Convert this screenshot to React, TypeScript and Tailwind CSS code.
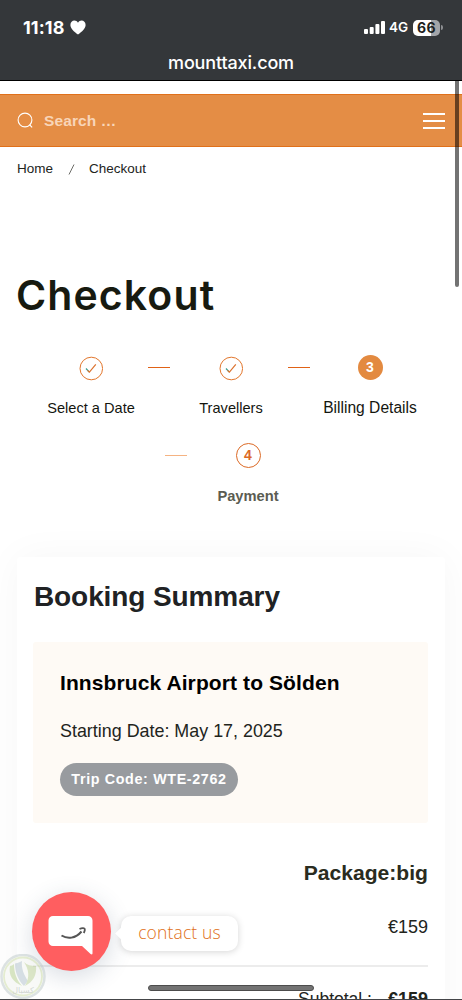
import type { ReactNode } from "react"

const CheckIcon = () => (
	<svg
		className="mt-px"
		width="24"
		height="25"
		viewBox="0 0 24 25"
		fill="none"
	>
		<circle cx="12.3" cy="12.5" r="11.3" stroke="#e2762c" strokeWidth="1" />
		<path d="M7 12.5l3.4 3.6" stroke="#3a9d8c" strokeWidth="1.2" />
		<path d="M8.5 14.3l1.9 1.9L16.8 8.300" stroke="#dc732f" strokeWidth="1.2" />
	</svg>
)

function StepLine({ className }: { className: string }) {
	return <div className={`mt-[12px] h-px w-[22px] ${className}`} />
}

function Step({
	icon,
	label,
	className,
}: {
	icon: ReactNode
	label: string
	className: string
}) {
	return (
		<div
			className={`flex flex-col items-center whitespace-nowrap ${className}`}
		>
			<div className="flex h-[25px] items-center">{icon}</div>
			<span className="mt-[18px] leading-[20px]">{label}</span>
		</div>
	)
}

function StatusBar() {
	return (
		<header className="h-[81px] border-b border-black bg-[#34373a] font-['Inter',sans-serif] text-white">
			<div className="flex h-[52px] items-center pt-[3px] pr-[19px] pl-[23px]">
				<span className="text-[18px] leading-none font-bold tracking-[0.1px]">
					11:18
				</span>
				<svg
					className="ml-[5px]"
					width="16"
					height="15"
					viewBox="0 0 16 15"
					fill="white"
				>
					<path d="M8 14.6C4 11.4.4 8.5.4 4.9.4 2.3 2.3.6 4.4.6 5.9.6 7.2 1.4 8 2.8 8.8 1.4 10.1.6 11.6.6c2.1 0 4 1.7 4 4.3 0 3.6-3.6 6.5-7.6 9.7z" />
				</svg>
				<svg
					className="ml-auto"
					width="21"
					height="13"
					viewBox="0 0 21 13"
					fill="white"
				>
					<rect x="0" y="8" width="4" height="5" rx="1" />
					<rect x="5.7" y="6" width="4" height="7" rx="1" />
					<rect x="11.4" y="3" width="4" height="10" rx="1" />
					<rect x="17" y="0" width="4" height="13" rx="1" />
				</svg>
				<span className="ml-[4px] text-[13.5px] leading-none font-semibold">
					4G
				</span>
				<div className="ml-[5px] flex h-[16px] w-[27px] items-center justify-center rounded-[5px] bg-linear-to-r from-white from-68% to-[#a3a5a9] to-68% text-[14px] leading-none font-bold tracking-[0.3px] text-[#1d1f21]">
					66
				</div>
				<div className="ml-px h-[5px] w-[2px] rounded-r-full bg-[#8c8e91]" />
			</div>
			<div className="text-center text-[18px] leading-[22px] font-medium tracking-[-0.15px]">
				mounttaxi.com
			</div>
		</header>
	)
}

function SearchBar() {
	return (
		<div className="mt-[13px] flex h-[53px] items-center border-y border-[#e0701a] bg-[#e48d45] pr-[17px] pl-[17px]">
			<svg width="17" height="17" viewBox="0 0 17 17" fill="none" stroke="white">
				<circle cx="8" cy="8" r="6.9" strokeWidth="1.1" />
				<path d="M12.5 12.6l2.6 2.7" strokeWidth="1.2" />
			</svg>
			<span className="mt-px ml-[10px] text-[15.5px] font-bold tracking-[0.1px] text-[#f8d5b8]">
				Search …
			</span>
			<div className="ml-auto flex w-[22px] flex-col gap-[5px]">
				<div className="h-[2px] bg-white" />
				<div className="h-[2px] bg-white" />
				<div className="h-[2px] bg-white" />
			</div>
		</div>
	)
}

function BookingSummary() {
	return (
		<section className="mx-[17px] mt-[51px] h-[500px] rounded-[3px] bg-white pt-[23px] pr-[17px] pl-[16px] shadow-[0_0_40px_rgba(0,0,0,0.04)]">
			<h2 className="pl-px text-[28px] leading-[34px] font-bold tracking-[-0.1px] text-[#202224]">
				Booking Summary
			</h2>
			<div className="mt-[28px] h-[181px] rounded-[3px] bg-[#fefaf5] pt-[29px] pl-[27px]">
				<h3 className="text-[21px] leading-[24px] font-bold tracking-[0.1px] whitespace-nowrap text-black">
					Innsbruck Airport to Sölden
				</h3>
				<p className="mt-[25px] text-[17.9px] leading-[22px] text-[#22241c]">
					Starting Date: May 17, 2025
				</p>
				<span className="mt-[21px] flex h-[33px] w-[178px] items-center justify-center rounded-full bg-[#989b9f] text-[14.3px] font-bold tracking-[0.65px] text-white">
					Trip Code: WTE-2762
				</span>
			</div>
			<div className="mt-[37px] text-right text-[21.1px] leading-[26px] font-bold text-[#2a2c20]">
				Package:big
			</div>
			<div className="mt-[30px] text-right text-[18px] leading-[22px] text-[#22241c]">
				€159
			</div>
			<div className="mt-[27px] h-[2px] bg-[#ececec]" />
			<div className="mt-[21px] flex justify-end gap-[16px] text-[17.5px] leading-[22px] text-[#22241c]">
				<span>Subtotal :</span>
				<b className="text-[18px]">€159</b>
			</div>
		</section>
	)
}

function ContactWidget() {
	return (
		<div className="absolute top-[892px] left-[32px] flex items-center">
			<div className="flex size-[79px] items-center justify-center rounded-full bg-[#ff5e60] shadow-[0_6px_24px_rgba(60,80,110,0.2)]">
				<svg
					className="mt-[7px] mr-[2px]"
					width="45"
					height="39"
					viewBox="0 0 45 39"
					fill="none"
				>
					<path
						d="M5 0h35a4.5 4.5 0 0 1 4.5 4.5v32.8c0 1.3-1 1.5-1.9.7L34 30H5a4.5 4.5 0 0 1-4.5-4.5v-21A4.5 4.5 0 0 1 5 0z"
						fill="white"
					/>
					<path
						d="M13.5 19.5c6 3.8 14 3.2 20-4"
						stroke="#555"
						strokeWidth="2"
					/>
					<path
						d="M31.5 13c3-1.5 5-.8 5.3 0 .3 1-.3 2.5-1 4"
						stroke="#555"
						strokeWidth="1.8"
					/>
				</svg>
			</div>
			<div className="relative mt-[3px] ml-[10px] flex h-[35px] w-[117px] items-center justify-center rounded-[10px] bg-white pb-px font-['Open_Sans',sans-serif] text-[17.5px] font-light tracking-[0.15px] text-[#df6f16] shadow-[0_1px_7px_rgba(0,0,0,0.17)]">
				<div className="absolute top-[13px] -left-[4px] size-[9px] rotate-45 bg-white" />
				contact us
			</div>
		</div>
	)
}

function Watermark() {
	return (
		<svg
			className="absolute top-[954px] left-0 opacity-50"
			width="47"
			height="46"
			viewBox="0 0 47 46"
			fill="none"
		>
			<circle cx="23" cy="22.5" r="21.5" fill="#f4f6f2" stroke="#bdc9c9" strokeWidth="2.5" />
			<circle cx="23" cy="22.5" r="19" stroke="#ccdda5" strokeWidth="1.8" />
			<path d="M10 12c-2 9 3 16 12 20-5-6-8-12-8-22-1 1-3 2-4 2z" fill="#b4cf8b" />
			<path d="M15 9.5c3-.4 5-1.500 7-2.500-1 7 2 14 6 20l-4 5C18 26 15 18 15 9.500z" fill="#aebfca" />
			<path d="M24 8c3 3 7 4 12 4 1 9-3 16-11 20 5-9 4-16-1-24z" fill="#b9cf91" />
			<text
				x="23"
				y="39"
				textAnchor="middle"
				fill="#a5aea7"
				fontSize="8"
				fontFamily="DejaVu Sans"
			>
				کسبال
			</text>
		</svg>
	)
}

export default function App() {
	return (
		<div className="relative h-[1000px] w-[462px] overflow-hidden bg-white font-['Liberation_Sans',Arial,sans-serif]">
			<StatusBar />
			<SearchBar />

			<nav className="flex h-[43px] items-center pt-px pl-[17px] text-[13.5px] text-[#22241c]">
				<span>Home</span>
				<svg className="ml-[15px]" width="7" height="11" viewBox="0 0 7 11">
					<path d="M1 10.5L6 .5" stroke="#6c6d68" />
				</svg>
				<span className="ml-[14px]">Checkout</span>
			</nav>

			<h1 className="mt-[79px] pl-[16px] font-['Inter',sans-serif] text-[41px] leading-[52px] font-semibold tracking-[1.1px] text-[#171a10]">
				Checkout
			</h1>

			<div className="mt-[34px] flex pl-[47px] text-[14.6px] text-[#14160f]">
				<Step className="w-[88px]" icon={<CheckIcon />} label="Select a Date" />
				<StepLine className="ml-[13px] bg-[#e06216]" />
				<Step
					className="ml-[29px] w-[64px]"
					icon={<CheckIcon />}
					label="Travellers"
				/>
				<StepLine className="ml-[25px] bg-[#e06216]" />
				<Step
					className="ml-[13px] w-[94px] text-[15.6px]"
					icon={
						<div className="flex size-[25px] items-center justify-center rounded-full bg-[#e38a40] text-[14px] font-bold text-white">
							3
						</div>
					}
					label="Billing Details"
				/>
			</div>

			<div className="mt-[25px] flex pl-[165px]">
				<StepLine className="bg-[#f5b382]" />
				<Step
					className="ml-[30px] w-[62px] text-[14.7px] font-bold text-[#5b5c52]"
					icon={
						<div className="flex size-[25px] items-center justify-center rounded-full border-[1.5px] border-[#dc6a26] text-[14px] font-bold text-[#dc6a26]">
							4
						</div>
					}
					label="Payment"
				/>
			</div>

			<BookingSummary />
			<ContactWidget />
			<Watermark />

			{/* page scrollbar, home indicator and bottom edge */}
			<div className="absolute top-[81px] left-[455px] h-[206px] w-[4px] rounded-b-full bg-black/55" />
			<div className="absolute top-[985px] left-[148px] h-[6px] w-[166px] rounded-full border border-[#4c4c4c] bg-[#737373]" />
			<div className="absolute bottom-0 left-0 h-px w-full bg-[#444548]" />
		</div>
	)
}
